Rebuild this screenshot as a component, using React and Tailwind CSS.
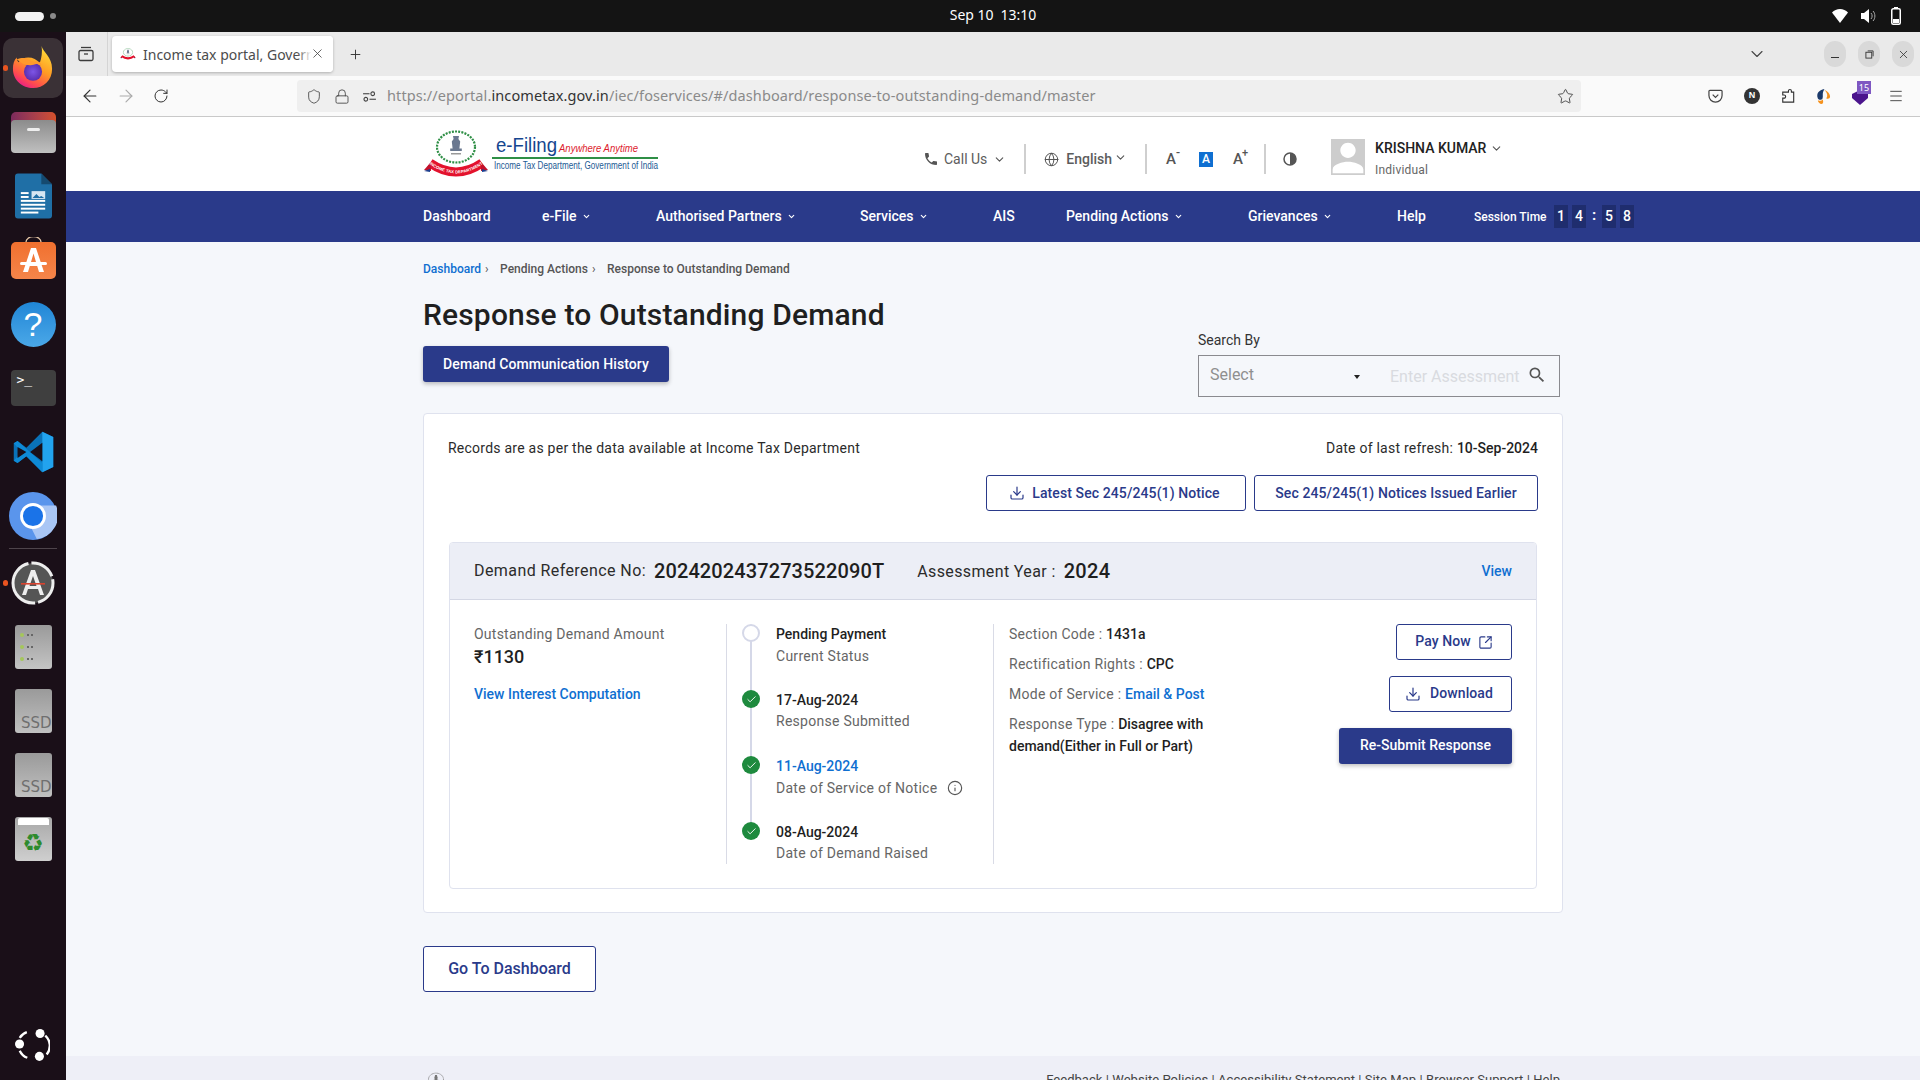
import React from 'react';
import { ArrowLeft, ArrowRight, RotateCw, Plus, X, Star, ChevronDown, Menu, Globe, Download, SquareArrowOutUpRight, Info, Check, Lock, Shield } from 'lucide-react';
import { MdPhone, MdPerson, MdSearch } from 'react-icons/md';

const navy = '#2a3a8a';

function Emblem({ className, ribbonText }) {
  return (
    <svg viewBox="0 0 66 48" className={className}>
      <ellipse cx="33" cy="17" rx="19" ry="15.500" fill="none" stroke="#2f8f46" strokeWidth="2.200" strokeDasharray="2 1.200" />
      <path d="M30 6h6l-.6 3 1.800 2.500-.8 7h2.400v2.500H27.200V18.500h2.400l-.8-7L30.600 9z" fill="#6a7890" />
      <rect x="28" y="23" width="10" height="1.500" fill="#999" />
      <path id="ribbonPath" d="M7 33 Q33 51 59 33" fill="none" stroke="#e3122d" strokeWidth="9" />
      <path d="M1 40l7-8v9zM65 40l-7-8v9z" fill="#c3102a" />
      <path d="M1 41l6-2v3zM65 41l-6-2v3z" fill="#1b3f8f" />
      {ribbonText && (
        <text fontFamily="Liberation Sans" fontWeight="bold" fontSize="4.200" fill="#fff" dy="1.400">
          <textPath href="#ribbonPath" startOffset="50%" textAnchor="middle">INCOME TAX DEPARTMENT</textPath>
        </text>
      )}
    </svg>
  );
}

function Logo() {
  return (
    <div className="w-[237px] h-[48px] flex mb-[10px]">
      <Emblem ribbonText className="w-[66px] h-[48px] shrink-0" />
      <svg viewBox="0 0 171 48" className="w-[171px] h-[48px] shrink-0">
        <text x="7" y="22" fontFamily="Liberation Sans" fontSize="20" fill="#15468f" textLength="61" lengthAdjust="spacingAndGlyphs">e-Filing</text>
        <text x="70" y="22" fontFamily="Liberation Sans" fontStyle="italic" fontSize="11" fill="#dd1b2c" textLength="79" lengthAdjust="spacingAndGlyphs">Anywhere Anytime</text>
        <rect x="3" y="27" width="166" height="2" fill="#2f8f46" />
        <text x="5" y="39" fontFamily="Liberation Sans" fontSize="10" fill="#1c5a94" textLength="164" lengthAdjust="spacingAndGlyphs">Income Tax Department, Government of India</text>
      </svg>
    </div>
  );
}

function Firefox() {
  return (
    <svg viewBox="0 0 44 46" className="w-[42px] h-[44px] mb-[2px]">
      <defs>
        <linearGradient id="ff1" x1="0.85" y1="0" x2="0.3" y2="1">
          <stop offset="0" stopColor="#ffe23a" />
          <stop offset="0.5" stopColor="#ff9a24" />
          <stop offset="0.82" stopColor="#ff4a50" />
          <stop offset="1" stopColor="#e81f86" />
        </linearGradient>
        <radialGradient id="ff2">
          <stop offset="0" stopColor="#7d55e6" />
          <stop offset="1" stopColor="#5a2fb0" />
        </radialGradient>
      </defs>
      <path d="M31 1c1 6 11 11 11 24 0 12-9 20-20 20S1 37 1 25c0-5 1-9 4-12 0 3 1 4 2 5 2-3 6-5 10-5 5 0 9 2 12 6 2-5 3-12 2-18z" fill="url(#ff1)" />
      <circle cx="22" cy="28" r="9.500" fill="url(#ff2)" />
      <path d="M5 15c5-2 9-2 12 0 3 2 5 3 8 2 3 0 5 1 6 4-3-2-6-1-10 0-5 1-11-1-16-6z" fill="#ff9a2c" />
    </svg>
  );
}

function DockTile({ children }) {
  return <div className="h-[64px] w-[66px] flex items-center justify-center shrink-0">{children}</div>;
}

function SSD() {
  return (
    <div className="w-[37px] h-[44px] rounded-[3px] bg-gradient-to-b from-[#9a9a9a] to-[#c0c0c0] flex items-end justify-end overflow-hidden">
      <span className="text-[15px] leading-[20px] text-[#6f6f6f] font-['DejaVu_Sans',sans-serif]">SSD</span>
    </div>
  );
}

function DiskRow() {
  return (
    <div className="flex items-center gap-[2px]">
      <div className="w-[4px] h-[4px] rounded-full bg-[#a5c75a]" />
      <div className="ml-[1px] w-[2px] h-[2px] bg-[#666]" />
      <div className="w-[2px] h-[2px] bg-[#666]" />
    </div>
  );
}

function Dock() {
  return (
    <div className="w-[66px] shrink-0 bg-[#1a0f18] flex flex-col pt-1 relative">
      <div className="absolute left-[3px] top-[6px] w-[60px] h-[60px] rounded-[10px] bg-[#3a3136]" />
      <div className="absolute left-[3px] top-[33px] w-[5px] h-[6px] rounded-full bg-[#e95420]" />
      <div className="absolute left-[3px] top-[548px] w-[5px] h-[6px] rounded-full bg-[#e95420]" />
      <DockTile>
        <div className="relative flex"><Firefox /></div>
      </DockTile>
      <DockTile>
        <div className="w-[45px] h-[41px] relative flex flex-col">
          <div className="h-[12px] rounded-t-[5px] bg-gradient-to-r from-[#7c2a5c] to-[#d4502a]" />
          <div className="absolute left-0 right-0 top-[8px] bottom-0 rounded-[4px] bg-gradient-to-b from-[#8c8c8c] to-[#c0c0c0] flex justify-center pt-[8px]">
            <div className="w-[13px] h-[3px] rounded-sm bg-[#eee]" />
          </div>
        </div>
      </DockTile>
      <DockTile>
        <svg viewBox="0 0 38 46" className="w-[37px] h-[46px]">
          <path d="M3 0h24l11 11v32a3 3 0 0 1-3 3H3a3 3 0 0 1-3-3V3a3 3 0 0 1 3-3z" fill="#1f6fa6" />
          <path d="M27 0l11 11H27z" fill="#154a70" />
          <rect x="6" y="19" width="8" height="2" fill="#fff" />
          <rect x="6" y="23" width="8" height="2" fill="#fff" />
          <rect x="6" y="27" width="25" height="2" fill="#fff" />
          <rect x="6" y="31" width="25" height="2" fill="#fff" />
          <rect x="6" y="35" width="25" height="2" fill="#fff" />
          <rect x="6" y="39" width="18" height="2" fill="#fff" />
          <rect x="17" y="18" width="14" height="8" fill="#d6e6f2" />
          <path d="M18 25l4-4 3 3 2-1 3 2z" fill="#1f6fa6" />
        </svg>
      </DockTile>
      <DockTile>
        <svg viewBox="0 0 45 42" className="w-[45px] h-[42px] mb-[4px]">
          <defs>
            <linearGradient id="st1" x1="0" y1="0" x2="0" y2="1">
              <stop offset="0" stopColor="#f0702f" />
              <stop offset="1" stopColor="#f5854a" />
            </linearGradient>
          </defs>
          <path d="M15 6V5a7 5 0 0 1 15 0v1" fill="none" stroke="#e8c9a8" strokeWidth="1.300" />
          <rect x="0" y="5" width="45" height="37" rx="5" fill="url(#st1)" />
          <path d="M20 11h5l8 24h-5l-1.800-6H18.800L17 35h-5zM22.500 16.500L20 25h5z" fill="#fff" />
          <rect x="9" y="25" width="27" height="3" rx="1.500" fill="#fff" />
        </svg>
      </DockTile>
      <DockTile>
        <div className="w-[45px] h-[45px] rounded-full bg-gradient-to-b from-[#1f86d6] to-[#4aa8e8] flex items-center justify-center">
          <span className="text-white text-[34px] leading-none font-['Liberation_Sans',sans-serif]">?</span>
        </div>
      </DockTile>
      <DockTile>
        <div className="w-[45px] h-[36px] rounded-[4px] bg-[#3f3f3f] flex items-start pl-[6px] pt-[2px]">
          <span className="text-white text-[13px] leading-[16px] font-['DejaVu_Sans_Mono',monospace]">&gt;_</span>
        </div>
      </DockTile>
      <DockTile>
        <svg viewBox="0 0 100 100" className="w-[43px] h-[42px]">
          <path d="M71 2L33 40 12 24 3 29v42l9 5 21-16 38 38 26-12V14z" fill="#0a72b8" />
          <path d="M71 2l26 12v72L71 98V2z" fill="#22a3ee" />
          <path d="M3 29l9-5 59 52v22L33 60 12 76l-9-5 18-21z" fill="#0e8ad6" />
          <path d="M12 38l21 12-21 14zM71 28v44L42 50z" fill="#1a0f18" />
        </svg>
      </DockTile>
      <DockTile>
        <svg viewBox="0 0 50 50" className="w-[48px] h-[48px]">
          <circle cx="25" cy="25" r="25" fill="#5a95ec" />
          <path d="M25 14h24a25 25 0 0 1-20 35l-9-18z" fill="#a9c6f5" />
          <circle cx="25" cy="25" r="12" fill="#1a73e8" stroke="#fff" strokeWidth="3" />
        </svg>
      </DockTile>
      <div className="h-[1px] mx-[9px] bg-[#4e444b] shrink-0" />
      <div className="h-[2px] shrink-0" />
      <DockTile>
        <svg viewBox="0 0 44 44" className="w-[44px] h-[44px]">
          <circle cx="22" cy="22" r="20" fill="#555" stroke="#eee" strokeWidth="3" strokeDasharray="26 3 60 3" />
          <path d="M20 9h4l9 25h-4l-2-6H17l-2 6h-4zM22 15l-3.500 10h7z" fill="#eee" />
          <rect x="10" y="22" width="24" height="1.600" fill="#d9432f" />
        </svg>
      </DockTile>
      <DockTile>
        <div className="w-[37px] h-[44px] rounded-[3px] bg-gradient-to-b from-[#9a9a9a] to-[#c4c4c4] flex flex-col justify-around py-[4px] pl-[5px]">
          <DiskRow />
          <DiskRow />
          <DiskRow />
        </div>
      </DockTile>
      <DockTile><SSD /></DockTile>
      <DockTile><SSD /></DockTile>
      <DockTile>
        <div className="w-[37px] h-[44px] rounded-[3px] bg-gradient-to-b from-[#a8a8a8] to-[#cfcfcf] flex flex-col items-center overflow-hidden">
          <div className="w-[31px] h-[7px] mt-[1px] bg-white rounded-t-[2px]" />
          <span className="text-[24px] leading-[36px] text-[#2e8b2e] font-['DejaVu_Sans',sans-serif]">♻</span>
        </div>
      </DockTile>
      <div className="mt-auto mb-[18px] ml-[15px] w-[35px] h-[34px]">
        <svg viewBox="0 0 37 34" className="w-[35px] h-[34px]">
          <path d="M12.500 3.500A14.500 14.500 0 0 0 5 9.500M5 23a14.500 14.500 0 0 0 8 7.500M32 7a14.500 14.500 0 0 1 1.500 20" fill="none" stroke="#fff" strokeWidth="2.500" />
          <circle cx="26.500" cy="4.800" r="4.800" fill="#fff" />
          <circle cx="4.800" cy="16" r="4.800" fill="#fff" />
          <circle cx="25.800" cy="29" r="4.800" fill="#fff" />
        </svg>
      </div>
    </div>
  );
}

function TopBar() {
  return (
    <div className="h-8 shrink-0 bg-[#141414] flex items-center relative font-['Noto_Sans',sans-serif]">
      <div className="ml-[15px] w-[29px] h-[9px] rounded-full bg-[#f2f2f2]" />
      <div className="ml-[6px] w-[6px] h-[6px] rounded-full bg-[#8a8a8a]" />
      <div className="absolute left-[66px] right-0 top-0 h-[29px] flex items-center justify-center">
        <span className="text-white text-[14px] tracking-[-0.05px]">Sep 10&nbsp; 13:10</span>
      </div>
      <div className="ml-auto mr-[19px] flex items-center">
        <svg viewBox="0 0 16 14" className="w-[16px] h-[14px]"><path d="M0 3.500C2 1.500 5 0 8 0s6 1.500 8 3.500L8 14z" fill="#fff" /></svg>
        <svg viewBox="0 0 16 16" className="w-[16px] h-[16px] ml-[12px]"><path d="M1 5h3l5-4v14l-5-4H1z" fill="#fff" /><path d="M11 5c1.500 1.500 1.500 4.500 0 6M13 3c2.500 2.500 2.500 7.500 0 10" fill="none" stroke="#aaa" strokeWidth="1" /></svg>
        <svg viewBox="0 0 10 18" className="w-[10px] h-[18px] ml-[15px]"><rect x="3" y="0" width="4" height="2" fill="#fff" /><rect x="0.750" y="1.750" width="8.500" height="15.500" rx="1.500" fill="none" stroke="#fff" strokeWidth="1.500" /><rect x="2" y="12" width="6" height="4" fill="#fff" /></svg>
      </div>
    </div>
  );
}

function TabBar() {
  return (
    <div className="h-11 shrink-0 bg-[#eaeaea] flex items-center font-['Noto_Sans',sans-serif]">
      <div className="w-[42px] h-full flex items-center justify-center border-r border-[#d4d4d4] pr-[1px]">
        <svg viewBox="0 0 16 16" className="w-[16px] h-[16px]" fill="none" stroke="#3c3c3c" strokeWidth="1.300">
          <path d="M3 1.500h10" />
          <rect x="1" y="4.500" width="14" height="10" rx="1.500" />
          <path d="M6 8h4" />
        </svg>
      </div>
      <div className="ml-[4px] w-[221px] h-[36px] bg-white rounded-[4px] shadow-[0_1px_3px_rgba(0,0,0,0.25)] flex items-center pl-[8px] relative overflow-hidden shrink-0">
        <Emblem className="w-[16px] h-[14px] shrink-0" />
        <span className="ml-[7px] text-[14px] text-[#4c4c4c] whitespace-nowrap">Income tax portal, Government of</span>
        <div className="absolute right-0 top-0 h-full w-[36px] bg-gradient-to-r from-transparent to-white to-40%" />
        <X className="absolute right-[8px] top-[10px] w-[15px] h-[15px] text-[#444]" strokeWidth={1.3} />
      </div>
      <Plus className="ml-[15px] w-[15px] h-[15px] text-[#333]" strokeWidth={1.5} />
      <ChevronDown className="ml-auto w-[20px] h-[20px] text-[#444]" strokeWidth={1.3} />
      <div className="ml-[57px] w-[22px] h-[26px] rounded-full bg-[#d9d9d9] flex items-center justify-center">
        <div className="w-[8px] h-[1.500px] mt-[7px] bg-[#333]" />
      </div>
      <div className="ml-[12px] w-[22px] h-[26px] rounded-full bg-[#d9d9d9] flex items-center justify-center">
        <svg viewBox="0 0 10 10" className="w-[9px] h-[9px]" fill="none" stroke="#333"><rect x="1" y="2.500" width="6.500" height="6.500" /><path d="M3 1h6v6" /></svg>
      </div>
      <div className="ml-[12px] mr-[6px] w-[22px] h-[26px] rounded-full bg-[#d9d9d9] flex items-center justify-center">
        <X className="w-[13px] h-[13px] text-[#333]" strokeWidth={1.5} />
      </div>
    </div>
  );
}

function NavBar() {
  return (
    <div className="h-[41px] shrink-0 bg-[#fafafa] border-b border-[#c9c9c9] flex items-center font-['Noto_Sans',sans-serif]">
      <ArrowLeft className="ml-[14px] w-[20px] h-[20px] text-[#333]" strokeWidth={1.4} />
      <ArrowRight className="ml-[16px] w-[20px] h-[20px] text-[#aaa]" strokeWidth={1.4} />
      <RotateCw className="ml-[17px] w-[16px] h-[16px] text-[#333]" strokeWidth={1.5} />
      <div className="ml-[128px] w-[1284px] h-[32px] bg-[#efefef] rounded-[4px] flex items-center pl-[9px] shrink-0">
        <Shield className="w-[16px] h-[17px] text-[#444]" strokeWidth={1.3} />
        <Lock className="ml-[12px] w-[16px] h-[17px] text-[#444]" strokeWidth={1.3} />
        <svg viewBox="0 0 16 12" className="ml-[12px] w-[15px] h-[11px]" fill="none" stroke="#444" strokeWidth="1.200"><circle cx="11.500" cy="3" r="2" /><path d="M1 3h7" /><circle cx="4" cy="9" r="2" /><path d="M8 9h7" /></svg>
        <span className="ml-[10px] text-[14.5px] tracking-[0.1px] whitespace-nowrap text-[#8a8a8a]">https://eportal.<span className="text-[#333]">incometax.gov.in</span>/iec/foservices/#/dashboard/response-to-outstanding-demand/master</span>
        <Star className="ml-auto mr-[7px] w-[17px] h-[17px] text-[#444]" strokeWidth={1.3} />
      </div>
      <svg viewBox="0 0 16 16" className="ml-[127px] w-[15px] h-[15px]" fill="none" stroke="#444" strokeWidth="1.300"><path d="M2 1.500h12a1 1 0 0 1 1 1V7a7 7 0 0 1-14 0V2.500a1 1 0 0 1 1-1z" /><path d="M5 6l3 3 3-3" /></svg>
      <div className="ml-[21px] w-[16px] h-[16px] rounded-full bg-[#333] flex items-center justify-center text-white text-[9px] font-bold font-['Liberation_Sans',sans-serif]">N</div>
      <svg viewBox="0 0 16 17" className="ml-[21px] w-[14px] h-[16px]" fill="none" stroke="#333" strokeWidth="1.300"><path d="M6 4h2.500V2.800a1.700 1.700 0 0 1 3.400 0V4H14.500v11.500H2V11h1.500a1.800 1.800 0 0 0 0-3.600H2V4z" /></svg>
      <svg viewBox="0 0 16 16" className="ml-[21px] w-[15px] h-[15px]"><path d="M9 0C3 1 0 5 2 10c1 2 4 2 5 0 1-3-1-5 2-10z" fill="#1b3a6b" /><path d="M9 1c3 1 6 4 6 7 0 2-2 3-4 2 2-3 1-6-2-9zM6 16c-2 0-4-2-4-4 2 1 4 1 5-1 1 2 1 5-1 5z" fill="#f5921e" /></svg>
      <div className="ml-[21px] relative w-[16px] h-[18px]">
        <svg viewBox="0 0 16 18" className="w-[16px] h-[18px]"><path d="M0 7l8-4 8 4v4l-8 7-8-7z" fill="#4a148c" /></svg>
        <span className="absolute left-[5px] top-[-6px] w-[14px] h-[13px] bg-[#7e57c2] text-white text-[9px] leading-[13px] text-center">15</span>
      </div>
      <Menu className="ml-[20px] w-[16px] h-[16px] text-[#333]" strokeWidth={1.3} />
    </div>
  );
}

function VSep({ className }) {
  return <div className={`w-[2px] h-[30px] bg-[#cfcfcf] shrink-0 ${className}`} />;
}

function SiteHeader() {
  return (
    <div className="h-[74px] shrink-0 bg-white pl-[357px] pt-[10px] flex items-center">
      <Logo />
      <MdPhone className="ml-[263px] w-[16px] h-[16px] text-[#555]" />
      <span className="ml-[5px] text-[14px] text-[#5c5c5c] mt-[1px]">Call Us</span>
      <ChevronDown className="ml-[6px] w-[13px] h-[13px] text-[#555]" strokeWidth={2} />
      <VSep className="ml-[18px]" />
      <Globe className="ml-[18px] w-[15px] h-[15px] text-[#555]" strokeWidth={1.6} />
      <span className="ml-[7px] text-[14px] font-medium text-[#5c5c5c]">English</span>
      <ChevronDown className="ml-[2px] mb-[3px] w-[13px] h-[13px] text-[#555]" strokeWidth={2} />
      <VSep className="ml-[18px]" />
      <span className="ml-[19px] relative text-[15px] font-medium text-[#555] w-[15px]">A<span className="absolute left-[10px] -top-[4px] text-[12px]">-</span></span>
      <span className="ml-[18px] w-[14px] h-[15px] bg-[#0f6fd1] text-white text-[12px] font-medium leading-[15px] text-center">A</span>
      <span className="ml-[20px] relative text-[15px] font-medium text-[#555] w-[15px]">A<span className="absolute left-[9px] -top-[3px] text-[11px]">+</span></span>
      <VSep className="ml-[16px]" />
      <svg viewBox="0 0 14 14" className="ml-[17px] w-[14px] h-[14px]"><circle cx="7" cy="7" r="6" fill="#fff" stroke="#555" strokeWidth="1.500" /><path d="M7 1a6 6 0 0 1 0 12z" fill="#555" /></svg>
      <div className="ml-[34px] w-[34px] h-[36px] mb-[4px] bg-[#cdcdcd] overflow-hidden flex items-end justify-center">
        <MdPerson className="w-[46px] h-[46px] text-white shrink-0 -mb-[6px]" />
      </div>
      <div className="ml-[10px] flex flex-col mb-[3px]">
        <div className="flex items-center leading-[20px] text-[14px] font-medium text-[#222]">
          KRISHNA KUMAR
          <ChevronDown className="ml-[4px] mt-[2px] w-[13px] h-[13px] text-[#555]" strokeWidth={2} />
        </div>
        <div className="text-[12px] leading-[16px] mt-[4px] text-[#666] tracking-[0.2px]">Individual</div>
      </div>
    </div>
  );
}

function NavItem({ className, label, chev }) {
  return (
    <div className={`flex items-center text-[14px] font-medium text-white whitespace-nowrap shrink-0 ${className}`}>
      {label}
      {chev && <ChevronDown className="ml-[5px] w-[9px] h-[9px] text-white" strokeWidth={3} />}
    </div>
  );
}

function Digit({ children }) {
  return <div className="w-[14px] h-[23px] bg-[#1f2d6e] text-white text-[14px] font-medium leading-[23px] text-center">{children}</div>;
}

function MainNav() {
  return (
    <div className="h-[51px] shrink-0 pl-[357px] flex items-center" style={{ backgroundColor: navy }}>
      <NavItem className="w-[119px]" label="Dashboard" />
      <NavItem className="w-[114px]" label="e-File" chev />
      <NavItem className="w-[204px]" label="Authorised Partners" chev />
      <NavItem className="w-[133px]" label="Services" chev />
      <NavItem className="w-[73px]" label="AIS" />
      <NavItem className="w-[182px]" label="Pending Actions" chev />
      <NavItem className="w-[149px]" label="Grievances" chev />
      <NavItem className="w-[77px]" label="Help" />
      <span className="text-white text-[12px] font-medium w-[80px] whitespace-nowrap">Session Time</span>
      <div className="flex items-center gap-[4px]">
        <Digit>1</Digit>
        <Digit>4</Digit>
        <span className="w-[8px] text-white font-bold text-[15px] text-center mb-[3px]">:</span>
        <Digit>5</Digit>
        <Digit>8</Digit>
      </div>
    </div>
  );
}

function OutlineBtn({ className, children }) {
  return (
    <div className={`h-[36px] border border-[#2a3a8a] rounded-[3px] bg-white flex items-center justify-center text-[14px] font-medium tracking-[0.1px] text-[#2a3a8a] whitespace-nowrap shrink-0 ${className}`}>
      {children}
    </div>
  );
}

function Dot({ done }) {
  return done ? (
    <div className="w-[18px] h-[18px] rounded-full bg-[#1e8a3e] flex items-center justify-center shrink-0 relative">
      <Check className="w-[11px] h-[11px] text-white" strokeWidth={2} />
    </div>
  ) : (
    <div className="w-[18px] h-[18px] rounded-full border-2 border-[#d5d8e8] bg-white shrink-0 relative" />
  );
}

function Step({ done, title, titleClass, sub, subClass, extra, className }) {
  return (
    <div className={`flex ${className}`}>
      <div className="w-[49px] flex justify-start pl-[15px] shrink-0"><Dot done={done} /></div>
      <div className="flex flex-col">
        <div className={`text-[14px] leading-[20px] font-medium ${titleClass}`}>{title}</div>
        <div className={`text-[14px] leading-[20px] text-[#666] tracking-[0.27px] flex items-center whitespace-nowrap ${subClass}`}>{sub}{extra}</div>
      </div>
    </div>
  );
}

function Timeline() {
  return (
    <div className="w-[267px] shrink-0 border-r border-[#d9dbe6] relative">
      <div className="absolute left-[23px] top-[17px] w-[2px] h-[195px] bg-[#d5d8e8]" />
      <Step title="Pending Payment" titleClass="text-[#1f1f1f]" sub="Current Status" subClass="mt-[2px]" className="h-[66px]" />
      <Step done title="17-Aug-2024" titleClass="text-[#1f1f1f]" sub="Response Submitted" subClass="mt-[1px]" className="h-[66px]" />
      <Step done title="11-Aug-2024" titleClass="text-[#0f6fd1]" sub="Date of Service of Notice" subClass="mt-[2px]" extra={<Info className="ml-[10px] w-[16px] h-[16px] text-[#555]" strokeWidth={1.7} />} className="h-[66px]" />
      <Step done title="08-Aug-2024" titleClass="text-[#1f1f1f]" sub="Date of Demand Raised" subClass="mt-[1px]" className="h-[42px]" />
    </div>
  );
}

function DemandCard() {
  return (
    <div className="mt-[31px] w-[1088px] h-[347px] border border-[#dfe2ee] rounded-[4px] bg-white overflow-hidden">
      <div className="h-[57px] bg-[#eceef6] border-b border-[#d4d7e4] flex items-center pl-[24px] pr-[24px]">
        <span className="text-[16px] text-[#2b2b2b] tracking-[0.42px]">Demand Reference No:</span>
        <span className="ml-[8px] mb-[1px] text-[20px] font-medium text-[#1f1f1f] tracking-[0.1px]">2024202437273522090T</span>
        <span className="ml-[33px] text-[16px] text-[#2b2b2b] tracking-[0.38px] mt-[1px]">Assessment Year :</span>
        <span className="ml-[8px] mb-[1px] text-[20px] font-medium text-[#1f1f1f] tracking-[0.3px]">2024</span>
        <span className="ml-auto text-[14px] font-medium text-[#0f6fd1]">View</span>
      </div>
      <div className="flex pt-[24px] h-[264px]">
        <div className="w-[277px] pl-[24px] shrink-0 border-r border-[#d9dbe6] h-[240px] flex flex-col">
          <div className="text-[14px] leading-[20px] text-[#666] tracking-[0.24px] whitespace-nowrap">Outstanding Demand Amount</div>
          <div className="text-[18px] leading-[24px] mt-[1px] font-medium text-[#1f1f1f] font-['Roboto','Noto_Sans',sans-serif]">₹1130</div>
          <div className="mt-[15px] text-[14px] leading-[20px] font-medium text-[#0f6fd1]">View Interest Computation</div>
        </div>
        <div className="h-[240px] flex"><Timeline /></div>
        <div className="flex-1 pl-[15px] pr-[24px] flex justify-between">
          <div className="w-[210px] text-[14px] leading-[22px] text-[#666] tracking-[0.27px]">
            <div className="h-[30px] leading-[20px] whitespace-nowrap">Section Code : <span className="font-medium text-[#1f1f1f] tracking-normal">1431a</span></div>
            <div className="h-[30px] leading-[20px] whitespace-nowrap">Rectification Rights : <span className="font-medium text-[#1f1f1f] tracking-normal">CPC</span></div>
            <div className="h-[29px] leading-[20px] whitespace-nowrap">Mode of Service : <span className="font-medium text-[#0f6fd1] tracking-normal">Email &amp; Post</span></div>
            <div className="leading-[22px]">Response Type : <span className="font-medium text-[#1f1f1f] tracking-normal">Disagree with demand(Either in Full or Part)</span></div>
          </div>
          <div className="flex flex-col items-end gap-[16px]">
            <OutlineBtn className="w-[116px]"><span className="mb-[1px]">Pay Now</span><SquareArrowOutUpRight className="ml-[7px] w-[15px] h-[15px]" strokeWidth={1.8} /></OutlineBtn>
            <OutlineBtn className="w-[123px] pr-[3px]"><Download className="mr-[9px] w-[16px] h-[16px]" strokeWidth={1.8} /><span className="mb-[1px]">Download</span></OutlineBtn>
            <div className="w-[173px] h-[36px] pb-[1px] rounded-[3px] flex items-center justify-center text-white text-[14px] font-medium shadow-[0_2px_4px_rgba(0,0,0,0.25)]" style={{ backgroundColor: navy }}>Re-Submit Response</div>
          </div>
        </div>
      </div>
    </div>
  );
}

function Content() {
  return (
    <div className="flex-1 min-h-0 bg-[#f5f7fb] pl-[357px] flex flex-col font-['Roboto',sans-serif]">
      <div className="mt-[19px] h-[16px] flex items-center text-[12px] font-medium text-[#555] whitespace-nowrap leading-[16px]">
        <span className="text-[#0f6fd1]">Dashboard</span>
        <span className="ml-[4px] w-[15px] font-normal">›</span>
        <span>Pending Actions</span>
        <span className="ml-[4px] w-[15px] font-normal">›</span>
        <span>Response to Outstanding Demand</span>
      </div>
      <div className="w-[1140px] flex justify-between h-[122px]">
        <div className="flex flex-col">
          <h1 className="mt-[20px] text-[30px] leading-[36px] font-medium text-[#1f1f1f] tracking-[0.16px] whitespace-nowrap">Response to Outstanding Demand</h1>
          <div className="mt-[13px] w-[246px] h-[36px] rounded-[3px] flex items-center justify-center text-white text-[14px] font-medium tracking-[0.08px] shadow-[0_2px_4px_rgba(0,0,0,0.25)]" style={{ backgroundColor: navy }}>Demand Communication History</div>
        </div>
        <div className="mr-[3px] w-[362px] flex flex-col">
          <div className="mt-[53px] text-[14px] leading-[20px] text-[#333]">Search By</div>
          <div className="mt-[5px] h-[42px] border border-[#8a8a8f] flex items-center pl-[11px]">
            <span className="text-[16px] text-[#8f8f8f] w-[144px] mb-[2px]">Select</span>
            <div className="w-0 h-0 border-x-[3px] border-x-transparent border-t-[4px] border-t-[#222] mt-[2px]" />
            <span className="ml-[30px] w-[130px] overflow-hidden whitespace-nowrap text-[16px] text-[#d9dbe0] mt-[1px]">Enter Assessment Year</span>
            <MdSearch className="ml-[7px] w-[20px] h-[20px] text-[#555] mb-[3px] shrink-0" />
          </div>
        </div>
      </div>
      <div className="w-[1140px] h-[500px] mt-[15px] bg-white border border-[#dfe2ee] rounded-[4px] shrink-0 pl-[24px] pr-[24px] flex flex-col">
        <div className="mt-[24px] h-[20px] flex justify-between items-center text-[14px] text-[#2b2b2b] tracking-[0.24px]">
          <span>Records are as per the data available at Income Tax Department</span>
          <span>Date of last refresh: <span className="font-medium text-[#1f1f1f] tracking-normal">10-Sep-2024</span></span>
        </div>
        <div className="mt-[17px] flex justify-end gap-[8px]">
          <OutlineBtn className="w-[260px] pr-[3px]"><Download className="mr-[7px] w-[16px] h-[16px]" strokeWidth={1.8} />Latest Sec 245/245(1) Notice</OutlineBtn>
          <OutlineBtn className="w-[284px]">Sec 245/245(1) Notices Issued Earlier</OutlineBtn>
        </div>
        <div className="pl-[1px]"><DemandCard /></div>
      </div>
      <div className="mt-[33px] w-[173px] h-[46px] border border-[#2a3a8a] rounded-[3px] bg-white flex items-center justify-center text-[16px] font-medium text-[#2a3a8a] shrink-0">Go To Dashboard</div>
      <div className="mt-[64px] h-[24px] -ml-[357px] bg-[#eeeff7] pl-[357px] pr-[360px] flex justify-between shrink-0 overflow-hidden">
        <Emblem className="mt-[16px] w-[26px] h-[20px] grayscale" />
        <div className="mt-[16px] text-[13px] leading-[16px] text-[#444] tracking-[0.05px] whitespace-nowrap">Feedback | Website Policies | Accessibility Statement | Site Map | Browser Support | Help</div>
      </div>
    </div>
  );
}

export default function App() {
  return (
    <div className="w-[1920px] h-[1080px] overflow-hidden flex flex-col font-['Roboto',sans-serif]">
      <TopBar />
      <div className="flex flex-1 min-h-0">
        <Dock />
        <div className="flex-1 min-w-0 flex flex-col">
          <TabBar />
          <NavBar />
          <SiteHeader />
          <MainNav />
          <Content />
        </div>
      </div>
    </div>
  );
}
